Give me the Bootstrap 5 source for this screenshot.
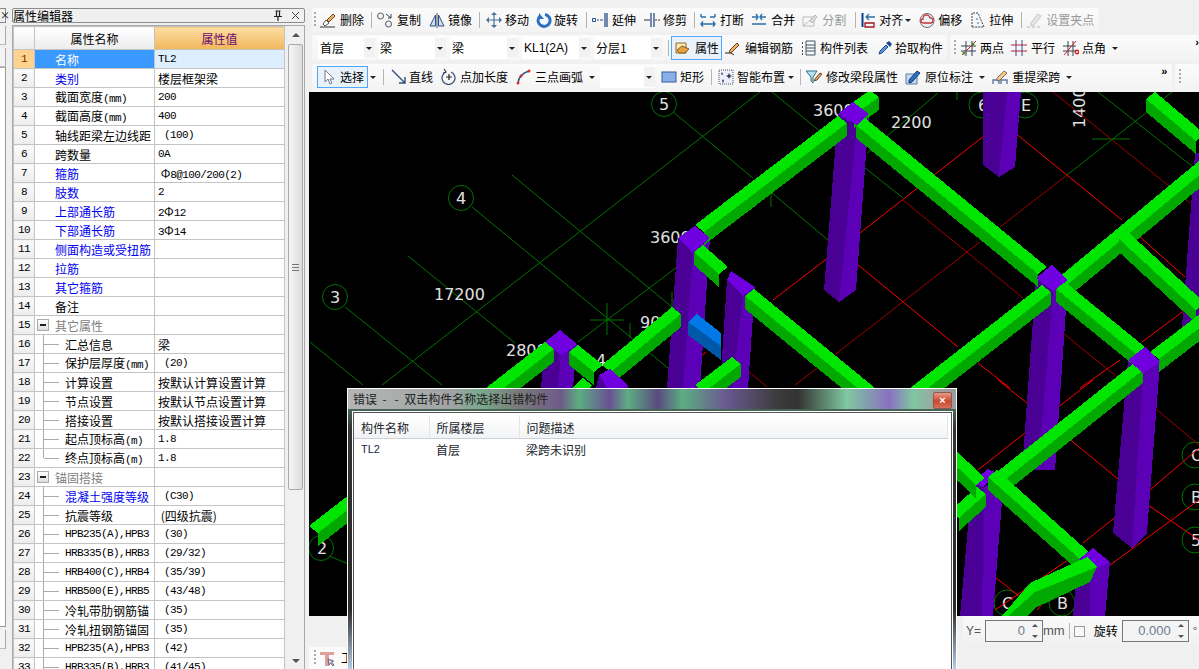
<!DOCTYPE html>
<html lang="zh-CN">
<head>
<meta charset="UTF-8">
<title>属性编辑器</title>
<link href="https://cdn.jsdelivr.net/npm/bootstrap@5.3.0/dist/css/bootstrap.min.css" rel="stylesheet">
<style>
  html, body { height: 669px; overflow: hidden; }
  body { background: #f0f0f0; font: 12px/1.2 "Noto Sans CJK SC", sans-serif; color: #000; }
  .app-root { width: 1199px; height: 669px; position: relative; overflow: hidden; }
  .mono { font-family: "Liberation Mono", monospace; font-size: 11px; letter-spacing: -.6px; line-height: 1; }

  /* 左端の細い帯 */
  .side-strip { width: 6px; flex: none; margin-right: 6px; padding-top: 8px; }
  .side-x { height: 15px; border: 1px solid #888; border-left: 0; font-size: 10px; line-height: 12px; text-align: right; background: #f0f0f0; }
  .side-tab { height: 19px; margin-top: 3px; border-right: 1px solid #aaa; border-bottom: 1px solid #bbb; background: #f4f4f4; }
  .side-body { height: 560px; background: #fff; border-right: 1px solid #999; border-bottom: 1px solid #999; border-top: 1px solid #aaa; }

  /* 属性编辑器 */
  .prop-panel { width: 293px; flex: none; margin-right: 4px; padding-top: 8px; }
  .prop-title { height: 15px; border: 1px solid #8c8c8c; border-radius: 2px; background: #f0f0f0; line-height: 13px; font-size: 12px; padding-right: 4px; }
  .prop-body { margin-top: 2px; height: 650px; border: 1px solid #a8a8a8; border-bottom: 0; background: #f0f0f0; overflow: hidden; }
  .prop-table { width: 272px; table-layout: fixed; margin: 0; border-collapse: collapse; flex: none; }
  .prop-table th, .prop-table td { padding: 0; height: 19px; border: 1px solid #c4c4c4; font-weight: 400; white-space: nowrap; overflow: hidden; line-height: 15px; background: #fff; color: #000; box-shadow: none; vertical-align: middle; }
  .prop-table thead th { height: 23px; text-align: center; font-size: 12px; background: linear-gradient(#fff, #ececec); }
  .prop-table thead th.val-head { background: linear-gradient(#fcdea4, #f2b75a); color: #6b0a6e; }
  .prop-table td.rn { text-align: center; background: linear-gradient(#fbfbfb, #ececec); }
  .prop-table td.nm { padding-left: 20px; position: relative; }
  .prop-table td.vl { padding-left: 3px; }
  .prop-table td.sub { padding-left: 30px; }
  .prop-table td.sub::before { content: ""; position: absolute; left: 8px; top: 0; bottom: 0; border-left: 1px solid #aaa; }
  .prop-table td.sub::after { content: ""; position: absolute; left: 9px; width: 15px; top: 9px; border-top: 1px solid #aaa; }
  .prop-table td.sub.last::before { bottom: 9px; }
  .prop-table .blue-txt { color: #0000f0; }
  .prop-table .gray-txt { color: #808080; }
  .prop-table tr.cur td.rn { background: #fdd28f; color: #7a2a00; }
  .prop-table tr.cur td.nm { background: #3a99ff; color: #fff; }
  .prop-table tr.cur td.vl { background: #ddeeff; }
  .fold-box { position: absolute; left: 2px; top: 3px; width: 12px; height: 12px; border: 1px solid #aaa; background: linear-gradient(#fff, #ddd); }
  .fold-box::after { content: ""; position: absolute; left: 2px; right: 2px; top: 4px; border-top: 2px solid #222; }
  .scroll-y { width: 15px; margin-left: 3px; margin-right: 2px; flex: none; position: relative; }
  .scroll-y i { position: absolute; left: 4px; border: 4px solid transparent; }
  .scroll-up { top: 3px; border-bottom-color: #555 !important; }
  .scroll-dn { top: 633px; border-top-color: #555 !important; }
  .scroll-thumb { position: absolute; left: 0; right: 0; top: 18px; height: 446px; border: 1px solid #aaa; border-radius: 2px; background: linear-gradient(90deg, #f6f6f6, #dcdcdc); }
  .scroll-grip { position: absolute; left: 3px; right: 3px; top: 219px; height: 7px; border-top: 1px solid #777; border-bottom: 1px solid #777; }
  .scroll-grip::after { content: ""; position: absolute; left: 0; right: 0; top: 2px; border-top: 1px solid #777; }

  /* ツールバー */
  .right-side { width: 890px; flex: none; }
  .bar-row { padding-left: 3px; }
  .tbar { background: linear-gradient(#fbfbfb, #f3f3f3); border-radius: 3px; padding-left: 2px; padding-right: 5px; white-space: nowrap; }
  .row-a { height: 24px; margin-top: 8px; }
  .row-b { height: 26px; margin-top: 3px; }
  .row-c { height: 28px; margin-top: 3px; padding-bottom: 2px; }
  .gap-seg { gap: 3px; }
  .grip-dots { width: 2px; height: 16px; margin-right: 4px; flex: none; background: repeating-linear-gradient(#aaa 0 2px, transparent 2px 4px); }
  .tl-item { display: inline-flex; align-items: center; gap: 4px; margin-right: 8px; flex: none; font-size: 12px; }
  .tl-item svg { width: 16px; height: 16px; flex: none; }
  .tl-off { color: #9a9a9a; }
  .tl-on { border: 1px solid #4da6ff; background: #e8f2fb; }
  .tl-sep { width: 1px; height: 16px; background: #b4b4b4; margin-left: -1px; margin-right: 5px; flex: none; }
  .tl-caret { width: 0; height: 0; border: 3px solid transparent; border-top: 3px solid #222; border-bottom: 0; flex: none; }
  .g1 { gap: 1px; } .g2 { gap: 2px; } .g3 { gap: 3px; }
  .mr1 { margin-right: 1px; } .mr2 { margin-right: 2px; } .mr3 { margin-right: 3px; } .mr5 { margin-right: 5px; } .mr6 { margin-right: 6px; } .mr7 { margin-right: 7px; } .mr9 { margin-right: 9px; } .mr10 { margin-right: 10px; }
  .sep-free { margin-left: 0; }
  .sel-btn { padding: 2px 3px 2px 5px; }
  .attr-btn { padding: 3px 2px 3px 3px; }
  .pick-box { width: 68px; height: 22px; background: #fff; margin-right: 4px; padding-left: 2px; line-height: 22px; position: relative; flex: none; font-size: 12px; }
  .pick-box::before { content: ""; position: absolute; right: 0; top: 1px; bottom: 1px; width: 11px; background: #f2f2f2; }
  .pick-box::after { content: ""; position: absolute; right: 3px; top: 10px; border: 3px solid transparent; border-top: 3px solid #222; border-bottom: 0; }
  .pick-first { width: 57px; margin-left: 4px; margin-right: 3px; }
  .pick-last { margin-right: 6px; }
  .pick-blank { width: 55px; margin-right: 6px; }
  .latin { font-family: "Liberation Sans", sans-serif; }
  .more-mark { font-size: 11px; font-weight: 700; font-family: "Liberation Sans", sans-serif; align-self: flex-start; margin-top: 1px; }
  .more-far { margin-left: 89px; }
  .seg-right { padding-left: 4px; }
  .seg-right .grip-dots { margin-right: 5px; }

  /* 作図エリア */
  .draw-area { width: 890px; height: 524px; background: #000; display: block; }
  .draw-area text { font-family: "DejaVu Sans", sans-serif; fill: #e0e0e0; font-size: 16px; }

  /* 下のバー */
  .state-bar { height: 53px; width: 890px; }
  .state-left { width: 37px; flex: none; padding-top: 31px; }
  .state-left .strip { height: 22px; background: #fbfbfb; padding-left: 5px; }
  .state-left svg, .state-word { flex: none; }
  .state-word { margin-left: 3px; }
  .state-right { width: 236px; height: 30px; margin-left: auto; background: linear-gradient(#fafafa, #f0f0f0); font-size: 12px; color: #555; padding-left: 3px; white-space: nowrap; }
  .spin-box { height: 22px; border: 1px solid #777; background: #f4f4f4; color: #6c7c92; font-size: 13px; font-family: "Liberation Sans", sans-serif; text-align: right; position: relative; line-height: 20px; flex: none; padding-right: 17px; }
  .spin-box::before, .spin-box::after { content: ""; position: absolute; right: 4px; border: 3px solid transparent; }
  .spin-box::before { top: 3px; border-bottom: 3px solid #555; border-top: 0; }
  .spin-box::after { bottom: 3px; border-top: 3px solid #555; border-bottom: 0; }
  .spin-y { width: 58px; }
  .spin-r { width: 67px; }
  .unit-mm { font-size: 13px; flex: none; }
  .state-right .tl-sep { margin: 0 4px; }
  .chk-box { width: 11px; height: 11px; border: 1px solid #999; background: #f8f8f8; flex: none; }
  .rot-word { color: #000; margin: 0 4px 0 9px; flex: none; }

  /* エラーダイアログ */
  .err-win { position: absolute; left: 347px; top: 388px; width: 610px; height: 290px; border: 1px solid #fff; border-bottom: 0;
    background: linear-gradient(#5c9c78 0, #333 40px, #2a2a2a 220px, #b8d0e8 281px); }
  .err-title { height: 20px; padding-left: 5px; line-height: 20px; font-size: 12px; color: #222; position: relative;
    background: linear-gradient(90deg, #b5b5b5 0, #a0a4a4 17%, #78a88c 22%, #7a7a7a 28%, #6f5a88 35%, #5cae82 38%, #6b4f94 43%, #5cae82 46%, #5a4a80 51%, #5cae82 55%, #6a5a90 62%, #3a3a3a 71%, #333 74%, #7fc8a0 82%, #8a70c0 89%, #7fc8a0 93%, #a0a0a0 97%, #9a9a9a 100%); }
  .err-close { position: absolute; right: 4px; top: 3px; width: 19px; height: 17px; border: 1px solid #8a5a50; border-radius: 2px; background: linear-gradient(#e89a88, #c8482c 55%, #d87058); color: #fff; text-align: center; font: 700 11px/14px "Liberation Sans", sans-serif; }
  .err-client { margin: 3px 4px 0 5px; height: 300px; border: 1px solid #555; outline: 1px solid #fff; background: #fff; padding-top: 2px; padding-right: 3px; }
  .err-table { width: 100%; table-layout: fixed; margin: 0; }
  .err-table th, .err-table td { padding: 0 0 0 7px; border: 0; font-weight: 400; background: none; box-shadow: none; white-space: nowrap; vertical-align: middle; }
  .err-table th { height: 23px; padding-top: 3px; border-bottom: 1px solid #ccd0d4; border-right: 1px solid #e4e6ea; background: linear-gradient(#fff, #f2f3f5); }
  .err-table td { height: 23px; }
  .err-table .latin-cell { font-family: "Liberation Sans", sans-serif; font-size: 11px; color: #1a2a4a; }
</style>
</head>
<body>
<div class="app-root d-flex">
  <div class="side-strip">
    <div class="side-x">×</div>
    <div class="side-tab"></div>
    <div class="side-tab"></div>
    <div class="side-body"></div>
    <div class="side-tab"></div>
  </div>

  <div class="prop-panel">
    <div class="prop-title d-flex align-items-center justify-content-between">
      <span>属性编辑器</span>
      <span class="d-flex align-items-center gap-2">
        <svg width="10" height="11" viewBox="0 0 10 11"><path d="M2.5 1h5M3.5 1v5M6.5 1v5M1 6.5h8M5 6.5V11" fill="none" stroke="#222" stroke-width="1.2"/></svg>
        <svg width="9" height="9" viewBox="0 0 9 9"><path d="M1 1l7 7M8 1L1 8" stroke="#444" fill="none"/></svg>
      </span>
    </div>
    <div class="prop-body d-flex">
      <table class="table prop-table">
        <colgroup><col style="width:21px"><col style="width:120px"><col></colgroup>
        <thead><tr><th></th><th>属性名称</th><th class="val-head">属性值</th></tr></thead>
        <tbody>
          <tr class="cur"><td class="rn mono">1</td><td class="nm">名称</td><td class="vl mono">TL2</td></tr>
          <tr><td class="rn mono">2</td><td class="nm blue-txt">类别</td><td class="vl">楼层框架梁</td></tr>
          <tr><td class="rn mono">3</td><td class="nm">截面宽度<span class="mono">(mm)</span></td><td class="vl mono">200</td></tr>
          <tr><td class="rn mono">4</td><td class="nm">截面高度<span class="mono">(mm)</span></td><td class="vl mono">400</td></tr>
          <tr><td class="rn mono">5</td><td class="nm">轴线距梁左边线距</td><td class="vl mono">&nbsp;(100)</td></tr>
          <tr><td class="rn mono">6</td><td class="nm">跨数量</td><td class="vl mono">0A</td></tr>
          <tr><td class="rn mono">7</td><td class="nm blue-txt">箍筋</td><td class="vl">&nbsp;Φ<span class="mono">8@100/200(2)</span></td></tr>
          <tr><td class="rn mono">8</td><td class="nm blue-txt">肢数</td><td class="vl mono">2</td></tr>
          <tr><td class="rn mono">9</td><td class="nm blue-txt">上部通长筋</td><td class="vl"><span class="mono">2</span>Φ<span class="mono">12</span></td></tr>
          <tr><td class="rn mono">10</td><td class="nm blue-txt">下部通长筋</td><td class="vl"><span class="mono">3</span>Φ<span class="mono">14</span></td></tr>
          <tr><td class="rn mono">11</td><td class="nm blue-txt">侧面构造或受扭筋</td><td class="vl"></td></tr>
          <tr><td class="rn mono">12</td><td class="nm blue-txt">拉筋</td><td class="vl"></td></tr>
          <tr><td class="rn mono">13</td><td class="nm blue-txt">其它箍筋</td><td class="vl"></td></tr>
          <tr><td class="rn mono">14</td><td class="nm">备注</td><td class="vl"></td></tr>
          <tr><td class="rn mono">15</td><td class="nm gray-txt"><span class="fold-box"></span>其它属性</td><td class="vl"></td></tr>
          <tr><td class="rn mono">16</td><td class="nm sub">汇总信息</td><td class="vl">梁</td></tr>
          <tr><td class="rn mono">17</td><td class="nm sub">保护层厚度<span class="mono">(mm)</span></td><td class="vl mono">&nbsp;(20)</td></tr>
          <tr><td class="rn mono">18</td><td class="nm sub">计算设置</td><td class="vl">按默认计算设置计算</td></tr>
          <tr><td class="rn mono">19</td><td class="nm sub">节点设置</td><td class="vl">按默认节点设置计算</td></tr>
          <tr><td class="rn mono">20</td><td class="nm sub">搭接设置</td><td class="vl">按默认搭接设置计算</td></tr>
          <tr><td class="rn mono">21</td><td class="nm sub">起点顶标高<span class="mono">(m)</span></td><td class="vl mono">1.8</td></tr>
          <tr><td class="rn mono">22</td><td class="nm sub last">终点顶标高<span class="mono">(m)</span></td><td class="vl mono">1.8</td></tr>
          <tr><td class="rn mono">23</td><td class="nm gray-txt"><span class="fold-box"></span>锚固搭接</td><td class="vl"></td></tr>
          <tr><td class="rn mono">24</td><td class="nm sub blue-txt">混凝土强度等级</td><td class="vl mono">&nbsp;(C30)</td></tr>
          <tr><td class="rn mono">25</td><td class="nm sub">抗震等级</td><td class="vl">&nbsp;(四级抗震)</td></tr>
          <tr><td class="rn mono">26</td><td class="nm sub mono">HPB235(A),HPB3</td><td class="vl mono">&nbsp;(30)</td></tr>
          <tr><td class="rn mono">27</td><td class="nm sub mono">HRB335(B),HRB3</td><td class="vl mono">&nbsp;(29/32)</td></tr>
          <tr><td class="rn mono">28</td><td class="nm sub mono">HRB400(C),HRB4</td><td class="vl mono">&nbsp;(35/39)</td></tr>
          <tr><td class="rn mono">29</td><td class="nm sub mono">HRB500(E),HRB5</td><td class="vl mono">&nbsp;(43/48)</td></tr>
          <tr><td class="rn mono">30</td><td class="nm sub">冷轧带肋钢筋锚</td><td class="vl mono">&nbsp;(35)</td></tr>
          <tr><td class="rn mono">31</td><td class="nm sub">冷轧扭钢筋锚固</td><td class="vl mono">&nbsp;(35)</td></tr>
          <tr><td class="rn mono">32</td><td class="nm sub mono">HPB235(A),HPB3</td><td class="vl mono">&nbsp;(42)</td></tr>
          <tr><td class="rn mono">33</td><td class="nm sub mono">HRB335(B),HRB3</td><td class="vl mono">&nbsp;(41/45)</td></tr>
        </tbody>
      </table>
      <div class="scroll-y">
        <i class="scroll-up"></i>
        <div class="scroll-thumb"><div class="scroll-grip"></div></div>
        <i class="scroll-dn"></i>
      </div>
    </div>
  </div>

  <div class="right-side d-flex flex-column">
    <div class="bar-row d-flex">
      <div class="tbar row-a d-inline-flex align-items-center">
        <span class="grip-dots"></span>
        <span class="tl-item"><svg viewBox="0 0 16 16"><path d="M0 15h15" stroke="#333"/><path d="M3 12l3-4 3 3-4 3z" fill="#fff" stroke="#555"/><path d="M7 8l6-6 2 2-6 6z" fill="#f0b060" stroke="#6a4a2a"/></svg>删除</span>
        <span class="tl-sep"></span>
        <span class="tl-item"><svg viewBox="0 0 16 16" fill="none" stroke="#556"><circle cx="3.5" cy="4" r="3"/><circle cx="11.5" cy="12" r="3"/><path d="M9 2l5 4M14 2v4h-3" stroke="#345"/></svg>复制</span>
        <span class="tl-item g3"><svg viewBox="0 0 16 16" fill="#cfe0f2" stroke="#2a4f8a"><path d="M1 14L6.5 3v11zM15 14L9.5 3v11z"/><path d="M8 1v15" stroke="#555"/></svg>镜像</span>
        <span class="tl-sep mr6"></span>
        <span class="tl-item g3 mr7"><svg viewBox="0 0 16 16" fill="#4a6f9a"><path d="M7.4 3h1.2v10H7.400zM3 7.400h10v1.200H3z"/><path d="M8 0l3 3H5zM8 16l-3-3h6zM0 8l3-3v6zM16 8l-3 3V5z"/></svg>移动</span>
        <span class="tl-item g2 mr9"><svg viewBox="0 0 16 16" fill="none"><path d="M4 4a6 6 0 1 0 5-1.500" stroke="#2a6fc4" stroke-width="3"/><path d="M3 1v6h5z" fill="#2a6fc4"/></svg>旋转</span>
        <span class="tl-sep"></span>
        <span class="tl-item"><svg viewBox="0 0 16 16" fill="none" stroke="#2a4f8a"><path d="M0.500 6.500h3v3h-3zM5 8h2M8 8h3"/><path d="M13 1v14M15 1v14" stroke-width="1.300"/></svg>延伸</span>
        <span class="tl-item g3"><svg viewBox="0 0 16 16" fill="none" stroke="#2a4f8a"><path d="M0 8h6M11 8h2M14 8h2" stroke="#334"/><path d="M7 1v14M10 1v14" stroke-width="1.300"/></svg>修剪</span>
        <span class="tl-sep"></span>
        <span class="tl-item mr7"><svg viewBox="0 0 16 16" fill="none" stroke="#2a6fa8" stroke-width="1.400"><path d="M1 5h5M10 5h5M1 5l0-3M15 5l0-3M1 12h14M3 9.500l-2 2.500 2 2.500M13 9.500l2 2.500-2 2.500"/></svg>打断</span>
        <span class="tl-item mr7"><svg viewBox="0 0 16 16" fill="none" stroke="#2a6fa8" stroke-width="1.400"><path d="M1 5h5M10 5h5M1 12h14M5 2l2 3-2 3M11 2L9 5l2 3"/></svg>合并</span>
        <span class="tl-item tl-off mr10"><svg viewBox="0 0 16 16" fill="none" stroke="#bbb"><path d="M1 5h11v9H1zM1 14L12 5"/><path d="M8 9l5-6 2 2-5 6z" fill="#ddd"/></svg>分割</span>
        <span class="tl-sep"></span>
        <span class="tl-item g2"><svg viewBox="0 0 16 16" fill="none"><path d="M1.500 1v14" stroke="#123a8a" stroke-width="2"/><path d="M14 5H5M8 2L5 5l3 3" stroke="#2a6fa8" stroke-width="1.300"/><path d="M4 11h9v4H4z" stroke="#a01820" stroke-width="1.300"/></svg>对齐<span class="tl-caret"></span></span>
        <span class="tl-item g3"><svg viewBox="0 0 16 16" fill="none"><circle cx="8" cy="8.500" r="7" stroke="#667" fill="#eef1f4"/><path d="M4 11a2 2 0 0 1 0-4 3 3 0 0 1 7-1 2.500 2.500 0 0 1 1 5z" stroke="#c83030" stroke-width="1.300"/></svg>偏移</span>
        <span class="tl-item g3 mr9"><svg viewBox="0 0 16 16" fill="none" stroke="#345"><path d="M2 15V1h6l6 14z" stroke-dasharray="2 1"/><path d="M7 6v2M8 10v2" stroke="#2a6fa8"/></svg>拉伸</span>
        <span class="tl-sep"></span>
        <span class="tl-item tl-off g3 me-0"><svg viewBox="0 0 16 16"><path d="M0 15h3M5 15h3M10 15h3" stroke="#bbb"/><path d="M4 11l7-9 3 2-7 9-3 1z" fill="#e8e8e8" stroke="#c4c4c4"/></svg>设置夹点</span>
      </div>
    </div>

    <div class="bar-row d-flex gap-seg">
      <div class="tbar row-b d-inline-flex align-items-center pe-1">
        <span class="pick-box pick-first">首层</span>
        <span class="pick-box">梁</span>
        <span class="pick-box">梁</span>
        <span class="pick-box latin">KL1(2A)</span>
        <span class="pick-box pick-last">分层1</span>
        <span class="tl-sep sep-free mr2"></span>
        <span class="tl-item tl-on attr-btn mr3"><svg viewBox="0 0 16 16"><path d="M1 3h10v10H1z" fill="#fde8b8" stroke="#8a6a2a"/><path d="M2 10l5-4 7 3-4 4H4z" fill="#e8a040" stroke="#8a5a20"/></svg>属性</span>
        <span class="tl-item"><svg viewBox="0 0 16 16"><path d="M0 13h6l3 2" fill="none" stroke="#222"/><path d="M5 10l7-7 2 2-7 7-3 1z" fill="#f0b060" stroke="#6a4a2a"/></svg>编辑钢筋</span>
        <span class="tl-item g3 mr9"><svg viewBox="0 0 16 16" fill="none" stroke="#456"><path d="M5 1h9v14H5zM5 5h9M5 8h9M5 11h9"/><path d="M1 3h2M1 7h2M1 11h2M1 14h2" stroke-dasharray="1 1" stroke-width="2"/></svg>构件列表</span>
        <span class="tl-item g2 me-0"><svg viewBox="0 0 16 16"><path d="M2 14l1-3 6-6 2 2-6 6z" fill="#5a9ae0" stroke="#1a4a8a"/><path d="M9 3l4 4 2-3-3-3z" fill="#1a4a8a"/></svg>拾取构件</span>
      </div>
      <div class="tbar row-b seg-right flex-grow-1 d-flex align-items-center pe-0">
        <span class="grip-dots"></span>
        <span class="tl-item g3 mr7"><svg viewBox="0 0 16 16" fill="none" stroke="#345"><path d="M0 6h15M0 11h15M5 1v15M11 1v15"/><path d="M1 15L15 1" stroke="#e02020"/><circle cx="3" cy="13" r="1.500" fill="#4a8a30" stroke="none"/><circle cx="12" cy="4" r="1.500" fill="#4a8a30" stroke="none"/></svg>两点</span>
        <span class="tl-item"><svg viewBox="0 0 16 16" fill="none"><path d="M0 5h16M0 11h16" stroke="#c02030"/><path d="M5 0v16M11 0v16" stroke="#34508a"/></svg>平行</span>
        <span class="tl-item g3 mr6"><svg viewBox="0 0 16 16" fill="none" stroke="#345"><path d="M0 6h13M0 11h13M5 1v15M10 1v15"/><path d="M1 15L13 1" stroke="#e02020"/><circle cx="14" cy="12" r="1.700" stroke="#d02020" stroke-width="1.400"/></svg>点角</span>
        <span class="tl-caret"></span>
        <span class="more-mark ms-auto">›</span>
      </div>
    </div>

    <div class="bar-row d-flex gap-seg">
      <div class="tbar row-c d-inline-flex align-items-center">
        <span class="grip-dots mr1 invisible"></span>
        <span class="tl-item tl-on sel-btn g1 mr2"><svg viewBox="0 0 16 16"><path d="M2 1v12l3-3 2 5 2-1-2-4h4z" fill="#fff" stroke="#778"/></svg>选择</span>
        <span class="tl-caret mr7"></span>
        <span class="tl-sep sep-free mr7"></span>
        <span class="tl-item g2"><svg viewBox="0 0 16 16" fill="none" stroke="#2a4f7a" stroke-width="1.400"><path d="M1 1l13 13M14 8v6H8"/></svg>直线</span>
        <span class="tl-item g3"><svg viewBox="0 0 16 16" fill="none" stroke="#334a6a" stroke-width="1.200"><path d="M5 3a6.500 6.500 0 1 0 5 0"/><path d="M8 5v6M5 8h6" stroke="#222"/><path d="M3 0l2 3-3 1"/></svg>点加长度</span>
        <span class="tl-item g3 mr6"><svg viewBox="0 0 16 16" fill="none"><path d="M2 14Q3 5 13 2" stroke="#2a4f7a" stroke-width="1.400"/><circle cx="2" cy="14" r="1.500" fill="#d83020"/><circle cx="5" cy="7" r="1.500" fill="#d83020"/><circle cx="13" cy="2" r="1.500" fill="#d83020"/></svg>三点画弧</span>
        <span class="tl-caret mr5"></span>
        <span class="pick-box pick-blank"></span>
        <span class="tl-item g3"><svg viewBox="0 0 16 16"><rect x="1" y="3" width="14" height="10" fill="#8ab0e8" stroke="#3a5a9a"/></svg>矩形</span>
        <span class="tl-sep mr6"></span>
        <span class="tl-item g3 mr6"><svg viewBox="0 0 16 16" fill="#345"><path d="M1 1h14v14H1z" fill="#eef" stroke="#456" stroke-dasharray="1 1"/><path d="M4 3l1 2-1 1-1-1zM11 4l1 2 2 1-2 1-1 2-1-2-2-1 2-1zM5 10l1 2-1 2-1-2z"/></svg>智能布置<span class="tl-caret"></span></span>
        <span class="tl-sep sep-free"></span>
        <span class="tl-item mr7"><svg viewBox="0 0 16 16"><path d="M0 2h11L7 8v6L5 12V8z" fill="#bfe0ee" stroke="#2a6f8a"/><path d="M9 10l5-6 2 1-5 6-3 1z" fill="#e8a860" stroke="#6a4a2a"/></svg>修改梁段属性</span>
        <span class="tl-item mr6"><svg viewBox="0 0 16 16"><path d="M1 5h11v10H1z" fill="#c8d8ee" stroke="#5a7aa8"/><path d="M4 11l8-9 3 2-8 9-3 1z" fill="#2a6fc0" stroke="#1a3a6a"/></svg>原位标注</span>
        <span class="tl-caret mr7"></span>
        <span class="tl-item mr6"><svg viewBox="0 0 16 16" fill="none"><path d="M1 15v-4h6v4M9 15v-4h6v4" stroke="#5a7aa8" stroke-width="1.400"/><path d="M5 9l7-7 3 2-7 7-3 1z" fill="#f0c890" stroke="#8a6a4a"/></svg>重提梁跨</span>
        <span class="tl-caret"></span>
        <span class="more-mark more-far">»</span>
      </div>
      <div class="tbar row-c seg-right flex-grow-1 d-flex align-items-center"><span class="grip-dots"></span></div>
    </div>

    <svg class="draw-area" id="drawArea" viewBox="309 92 890 524" shape-rendering="crispEdges">
      <g id="gridLines" fill="none" stroke="#007400" stroke-width="1" shape-rendering="auto"></g>
      <g fill="none" stroke="#007400" shape-rendering="auto">
        <circle cx="664" cy="104" r="12.500"/><circle cx="461" cy="198" r="12.500"/><circle cx="335" cy="297" r="12.500"/>
        <circle cx="982" cy="105" r="13"/><circle cx="1025" cy="105" r="13"/><circle cx="321" cy="548" r="12.500"/>
        <circle cx="1195" cy="455" r="13"/><circle cx="1195" cy="497" r="13"/><circle cx="1195" cy="540" r="13"/>
        <circle cx="1007" cy="603" r="13"/><circle cx="1062" cy="603" r="13"/>
      </g>
      <g shape-rendering="auto">
        <text x="659" y="110">5</text><text x="456" y="204">4</text><text x="330" y="303">3</text>
        <text x="978" y="111">6</text><text x="1021" y="111">E</text><text x="317" y="554">2</text>
        <text x="1191" y="461">C</text><text x="1191" y="503">B</text><text x="1191" y="546">5</text>
        <text x="1002" y="609">C</text><text x="1057" y="609">B</text>
        <text x="650" y="243">3600</text><text x="434" y="300">17200</text><text x="506" y="356">2800</text>
        <text x="640" y="328">90</text><text x="813" y="116">3600</text><text x="891" y="128">2200</text>
        <text x="596" y="366">4</text>
        <text transform="translate(1085 128) rotate(-90)">1400</text>
      </g>
      <g id="redLines" fill="none" stroke-width="1" shape-rendering="auto"></g>
      <g id="solids"></g>
    </svg>

    <div class="state-bar d-flex">
      <div class="state-left"><div class="strip d-flex align-items-center gap-1">
        <span class="grip-dots me-0"></span>
        <svg width="14" height="15" viewBox="0 0 14 15"><path d="M0 1h14v3H9v11H5V4H0z" fill="#dda09c"/><path d="M8 8l1 6 1.500-2 2.500 3 1-1-2.500-3 2-1z" fill="#cfd8e8" stroke="#667"/></svg>
        <span class="state-word">工</span>
      </div></div>
      <div class="state-right d-flex align-items-center">
        <span class="me-1 latin">Y=</span>
        <span class="spin-box spin-y">0</span>
        <span class="unit-mm latin">mm</span>
        <span class="tl-sep"></span>
        <span class="chk-box"></span>
        <span class="rot-word">旋转</span>
        <span class="spin-box spin-r">0.000</span>
        <span class="ms-1">°</span>
      </div>
    </div>
  </div>

  <div class="err-win">
    <div class="err-title">错误&nbsp;&nbsp;-&nbsp;&nbsp;&nbsp;-&nbsp;&nbsp;双击构件名称选择出错构件<span class="err-close">×</span></div>
    <div class="err-client">
      <table class="table err-table">
        <colgroup><col style="width:75px"><col style="width:90px"><col></colgroup>
        <thead><tr><th>构件名称</th><th>所属楼层</th><th>问题描述</th></tr></thead>
        <tbody><tr><td class="latin-cell">TL2</td><td>首层</td><td>梁跨未识别</td></tr></tbody>
      </table>
    </div>
  </div>
</div>

<script src="https://cdn.jsdelivr.net/npm/bootstrap@5.3.0/dist/js/bootstrap.bundle.min.js"></script>
<script>
  const NS = "http://www.w3.org/2000/svg";
  const solids = document.getElementById("solids");

  function addLine(group, x1, y1, x2, y2, color) {
    const l = document.createElementNS(NS, "line");
    l.setAttribute("x1", x1); l.setAttribute("y1", y1);
    l.setAttribute("x2", x2); l.setAttribute("y2", y2);
    if (color) l.setAttribute("stroke", color);
    group.appendChild(l);
  }

  function poly(points, fill) {
    const p = document.createElementNS(NS, "polygon");
    p.setAttribute("points", points.map(a => a.join(",")).join(" "));
    p.setAttribute("fill", fill);
    solids.appendChild(p);
  }

  // 梁: 上端の辺を渡すと上面と側面を描く
  function beam(x1, y1, x2, y2) {
    const ox = y2 < y1 ? 9 : -9;
    const a = [x1 + ox, y1 + 7], b = [x2 + ox, y2 + 7];
    poly([a, b, [b[0], b[1] + 13], [a[0], a[1] + 13]], "#00a800");
    poly([[x1, y1], [x2, y2], b, a], "#00e600");
  }

  // 柱: 左面・右面
  function column(left, mid, right) {
    poly([left[0], mid[0], mid[1], left[1]], "#4a0095");
    poly([mid[0], right[0], right[1], mid[1]], "#5c00b8");
  }

  function capTop(points) { poly(points, "#7000e0"); }

  const grid = document.getElementById("gridLines");
  [
    [673,112,753,178],[472,207,668,368],[512,175,672,307],[408,256,515,343],[345,307,442,385],[310,342,363,385],
    [382,385,760,92],[578,342,677,267],[772,92,827,137],[772,193,828,240],[865,168,903,198],
    [938,93,867,153],[1137,120,1067,175],[1172,92,1137,120],[1098,92,1193,167],[329,556,358,568],
    [607,303,607,335],[630,323,630,338],[672,292,672,307],[771,193,771,207],[957,92,957,100],[1092,139,1130,139],[590,320,624,320]
  ].forEach(a => addLine(grid, ...a));

  const red = document.getElementById("redLines");
  const bright = "#ff0000", dim = "#a00000";
  [
    [989,132,915,190],[915,190,860,233],[829,257,773,300],[1014,132,1122,220],[1140,237,1185,277],
    [852,260,958,347],[978,363,1010,388],[1185,310,1142,342],[1120,360,1080,388],
    [1035,425,978,470],[1093,380,1057,408],[998,380,1027,403],[1050,423,1118,479],[1199,448,1150,490],
    [1145,503,1199,540],[1199,500,1110,565],[1128,507,1083,543],[1078,553,995,610],[1060,583,1037,610],[995,577,1020,597],
    [668,380,676,374],[700,357,706,352]
  ].forEach(a => addLine(red, ...a, bright));
  [
    [1067,175,1000,227],[980,242,837,353],[837,353,795,385],[903,200,1023,298],[1063,333,1117,377],
    [1053,92,1190,203],[1156,409,1199,445],[749,372,767,387]
  ].forEach(a => addLine(red, ...a, dim));

  // 柱の本体
  column([[983,92],[983,165]], [[1007,92],[999,177]], [[1021,92],[1015,167]]);
  column([[838,114],[824,290]], [[857,125],[839,302]], [[869,114],[856,290]]);
  column([[1195,153],[1182,327]], [[1199,153],[1199,327]], [[1199,153],[1199,327]]);
  column([[678,238],[667,388]], [[693,252],[683,388]], [[710,238],[700,388]]);
  poly([[688,322],[697,314],[721,333],[721,346]], "#0078e8");
  poly([[688,322],[721,346],[721,360],[688,335]], "#0058a8");
  column([[727,280],[720,388]], [[743,295],[732,388]], [[755,287],[748,388]]);
  column([[545,342],[541,388]], [[561,355],[558,388]], [[577,344],[573,388]]);
  column([[599,375],[596,388]], [[612,386],[612,388]], [[628,385],[628,388]]);
  column([[1036,278],[1022,470]], [[1053,291],[1038,470]], [[1068,280],[1055,470]]);
  column([[1128,360],[1113,533]], [[1143,373],[1132,548]], [[1160,362],[1147,533]]);
  column([[972,482],[960,616]], [[984,487],[982,616]], [[1004,475],[993,616]]);
  capTop([[972,482],[988,469],[997,473],[984,487]]);
  column([[1078,560],[1073,616]], [[1090,572],[1090,616]], [[1110,562],[1105,616]]);

  // 梁
  beam(309,526,545,342);
  beam(578,345,603,365);
  beam(602,365,672,307);
  poly([[572,388],[583,378],[592,385],[590,388]], "#00e600");
  beam(695,385,732,357);
  beam(703,245,728,267);
  beam(754,289,880,392);
  beam(695,225,838,116);
  beam(845,108,870,90);
  beam(865,118,1047,267);
  beam(1155,92,1205,134);
  beam(1058,278,1205,156);
  beam(1128,232,1205,303);
  beam(905,392,1042,285);
  beam(1065,282,1145,347);
  beam(1150,352,1205,310);
  beam(997,472,1134,363);
  beam(997,470,1090,553);
  beam(950,511,977,487);
  beam(950,445,985,478);

  // 柱の天面
  capTop([[560,330],[577,344],[561,355],[545,342]]);
  capTop([[610,369],[628,385],[610,392],[599,375]]);
  capTop([[695,226],[710,238],[693,252],[678,238]]);
  capTop([[731,271],[755,287],[743,295],[727,280]]);
  capTop([[853,102],[869,114],[857,125],[838,114]]);
  capTop([[1052,265],[1068,280],[1053,291],[1036,278]]);
  capTop([[1145,347],[1160,362],[1143,373],[1128,360]]);
  capTop([[1093,548],[1110,562],[1090,572],[1078,560]]);

  // 折れた梁
  poly([[1097,567],[1090,582],[1035,608],[1028,616],[1008,616],[1035,592]], "#00a800");
  poly([[1087,557],[1097,567],[1035,592],[1008,616],[1002,616],[1030,583]], "#00e600");
</script>
</body>
</html>
